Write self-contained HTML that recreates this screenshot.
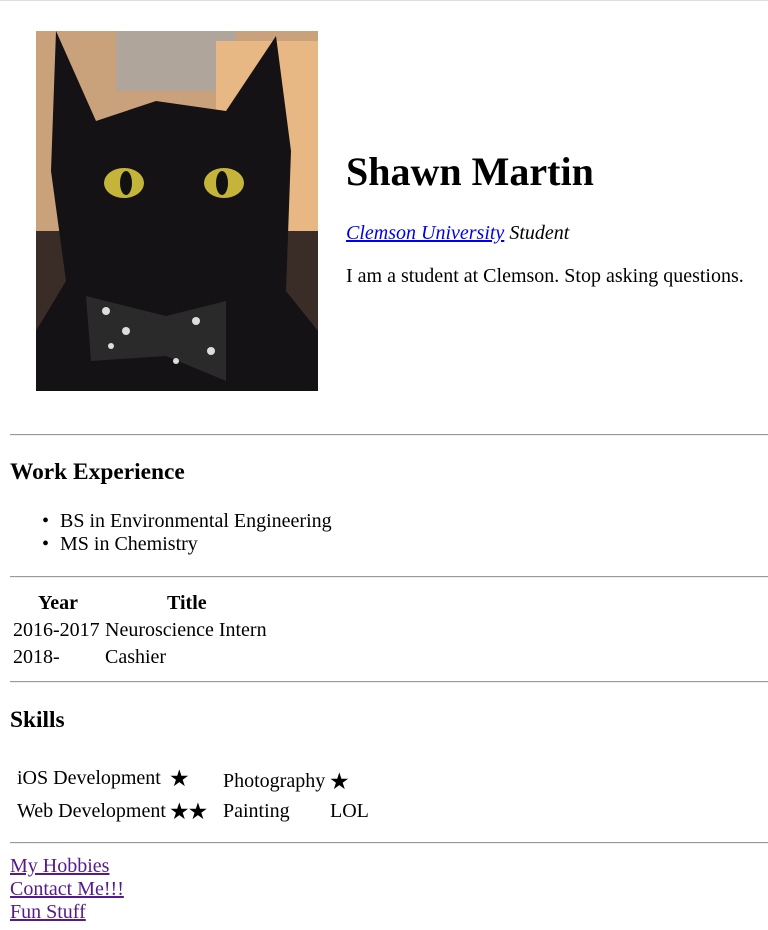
<!DOCTYPE html>
<html><head><style>
body{margin:0;width:768px;height:930px;position:relative;font-family:"Liberation Serif",serif;font-size:20px;color:#000;background:#fff;overflow:hidden}
.a{position:absolute;white-space:nowrap;line-height:1}
hr{position:absolute;left:10px;width:758px;margin:0;border:0;border-top:1px solid #9a9a9a;border-bottom:1px solid #eee;height:0}
a{color:#551a8b}
.s{font-family:'DejaVu Sans';font-size:23px}
</style></head><body>
<div style="position:absolute;left:0;top:0;width:768px;height:1px;background:#ddd"></div>
<svg class="a" style="left:36px;top:31px" width="282" height="360" viewBox="0 0 282 360">
<rect width="282" height="360" fill="#c9a27c"/>
<rect x="80" y="0" width="120" height="60" fill="#b0a59a"/>
<rect x="180" y="10" width="102" height="200" fill="#e8b884"/>
<rect x="0" y="200" width="282" height="160" fill="#3a2d28"/>
<path d="M20 0 L60 90 L120 70 L190 80 L240 5 L255 120 L250 260 L282 300 L282 360 L0 360 L0 300 L30 250 L15 140 Z" fill="#141214"/>
<ellipse cx="88" cy="152" rx="20" ry="15" fill="#c4b53a"/>
<ellipse cx="188" cy="152" rx="20" ry="15" fill="#c4b53a"/>
<ellipse cx="90" cy="152" rx="6" ry="12" fill="#111"/>
<ellipse cx="186" cy="152" rx="6" ry="12" fill="#111"/>
<path d="M50 265 L130 285 L190 270 L190 350 L130 325 L55 330 Z" fill="#2a2a2a"/>
<g fill="#ddd"><circle cx="70" cy="280" r="4"/><circle cx="90" cy="300" r="4"/><circle cx="160" cy="290" r="4"/><circle cx="175" cy="320" r="4"/><circle cx="140" cy="330" r="3"/><circle cx="75" cy="315" r="3"/></g>
</svg>
<div class="a" style="left:346px;top:152px;font-size:40px;font-weight:bold">Shawn Martin</div>
<div class="a" style="left:346px;top:223px;font-style:italic"><a href="#" style="color:#00e">Clemson University</a> Student</div>
<div class="a" style="left:346px;top:266px">I am a student at Clemson. Stop asking questions.</div>
<hr style="top:434px">
<div class="a" style="left:10px;top:461px;font-size:23.4px;font-weight:bold">Work Experience</div>
<div class="a" style="left:42px;top:511px">•</div><div class="a" style="left:60px;top:511px">BS in Environmental Engineering</div>
<div class="a" style="left:42px;top:534px">•</div><div class="a" style="left:60px;top:534px">MS in Chemistry</div>
<hr style="top:576px">
<div class="a" style="left:38px;top:593px;font-weight:bold">Year</div>
<div class="a" style="left:167px;top:593px;font-weight:bold">Title</div>
<div class="a" style="left:13px;top:620px">2016-2017</div>
<div class="a" style="left:105px;top:620px">Neuroscience Intern</div>
<div class="a" style="left:13px;top:647px">2018-</div>
<div class="a" style="left:105px;top:647px">Cashier</div>
<hr style="top:681px">
<div class="a" style="left:10px;top:709px;font-size:23.4px;font-weight:bold">Skills</div>
<div class="a" style="left:17px;top:768px">iOS Development</div>
<div class="a s" style="left:169px;top:768px">★</div>
<div class="a" style="left:223px;top:771px">Photography</div>
<div class="a s" style="left:329px;top:771px">★</div>
<div class="a" style="left:17px;top:801px">Web Development</div>
<div class="a s" style="left:169px;top:801px;letter-spacing:-2px">★★</div>
<div class="a" style="left:223px;top:801px">Painting</div>
<div class="a" style="left:330px;top:801px">LOL</div>
<hr style="top:842px">
<div class="a" style="left:10px;top:856px"><a href="#">My Hobbies</a></div>
<div class="a" style="left:10px;top:879px"><a href="#">Contact Me!!!</a></div>
<div class="a" style="left:10px;top:902px"><a href="#">Fun Stuff</a></div>
</body></html>
